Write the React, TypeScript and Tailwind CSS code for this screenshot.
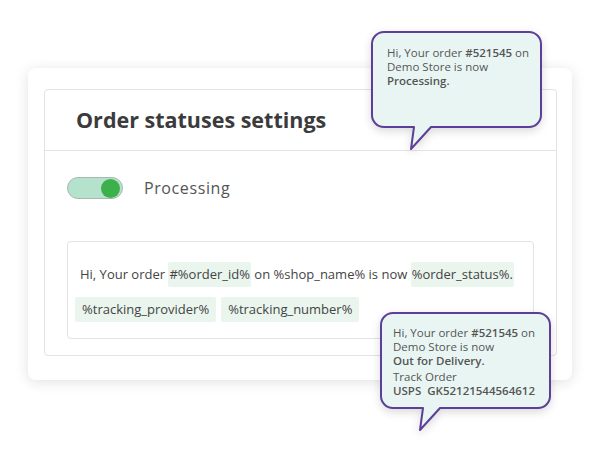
import React from 'react';

const Bubble: React.FC<{ className: string; children: React.ReactNode }> = ({ className, children }) => (
  <div className={`absolute w-[172px] h-[120px] ${className}`}>
    <svg
      className="absolute inset-0 drop-shadow-[0_3px_4px_rgba(0,0,0,0.15)]"
      width="172"
      height="120"
      viewBox="0 0 172 120"
    >
      <path
        d="M13 1 H158 A12 12 0 0 1 170 13 V84 A12 12 0 0 1 158 96 H60 L40 118 L43 96 H13 A12 12 0 0 1 1 84 V13 A12 12 0 0 1 13 1 Z"
        fill="#e9f5f3"
        stroke="#5b3f98"
        strokeWidth="2"
        strokeLinejoin="round"
      />
    </svg>
    <div className="relative text-[11.5px] leading-[14px] text-[#555] whitespace-nowrap">{children}</div>
  </div>
);

const Tag: React.FC<{ tight?: boolean; children: React.ReactNode }> = ({ tight, children }) => (
  <span className={`bg-[#eaf5ee] rounded-[2px] h-[25px] flex items-center ${tight ? 'px-[1px]' : 'px-[7px]'}`}>
    {children}
  </span>
);

const App: React.FC = () => {
  return (
    <div className="relative w-[600px] h-[450px] bg-white font-['Open_Sans',sans-serif] overflow-hidden">
      <div className="pt-[68px] pl-[28px]">
        <div className="w-[544px] h-[312px] bg-white rounded-[8px] shadow-[0_2px_14px_rgba(0,0,0,0.12)] pt-[21px] pl-[16px]">
          <div className="w-[513px] h-[267px] border border-[#e3e3e3] rounded-[4px]">
            <div className="h-[61px] border-b border-[#e3e3e3] flex items-center pl-[31px]">
              <h1 className="text-[21.5px] font-bold text-[#3b3b3b]">Order statuses settings</h1>
            </div>
            <div className="flex items-center pt-[25px] pl-[22px]">
              <div className="w-[56px] h-[22px] rounded-full bg-[#b5e2cd] border border-[#a9b9b1] flex items-center justify-end pr-[2px]">
                <div className="w-[19px] h-[19px] rounded-full bg-[#3cb04b]" />
              </div>
              <span className="ml-[21px] text-[16px] text-[#555] tracking-[0.6px]">Processing</span>
            </div>
            <div className="mt-[41px] ml-[22px] w-[467px] h-[98px] border border-[#e3e3e3] rounded-[4px] pt-[20px] text-[13px] text-[#444] whitespace-nowrap">
              <div className="flex items-center pl-[12px]">
                <span>Hi, Your order&nbsp;</span>
                <Tag tight>#%order_id%</Tag>
                <span>&nbsp;on %shop_name% is now&nbsp;</span>
                <Tag tight>%order_status%.</Tag>
              </div>
              <div className="flex items-center gap-[5px] pl-[7px] mt-[10px]">
                <Tag>%tracking_provider%</Tag>
                <Tag>%tracking_number%</Tag>
              </div>
            </div>
          </div>
        </div>
      </div>

      <Bubble className="left-[371px] top-[31px]">
        <div className="pl-[16px] pt-[15px]">
          <div>
            Hi, Your order <span className="font-semibold">#521545</span> on
          </div>
          <div>Demo Store is now</div>
          <div className="font-semibold">Processing.</div>
        </div>
      </Bubble>

      <Bubble className="left-[380px] top-[312px]">
        <div className="pl-[13px] pt-[14px]">
          <div>
            Hi, Your order <span className="font-semibold">#521545</span> on
          </div>
          <div>Demo Store is now</div>
          <div className="font-semibold">Out for Delivery.</div>
          <div className="mt-[2px]">Track Order</div>
          <div className="font-semibold">USPS&nbsp; GK52121544564612</div>
        </div>
      </Bubble>
    </div>
  );
};

export default App;
